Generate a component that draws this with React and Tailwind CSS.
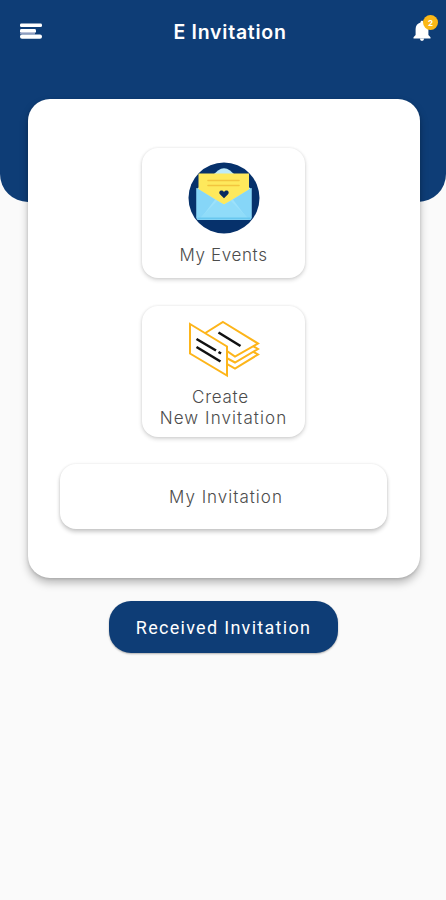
// src/App.jsx

function MenuIcon() {
  return (
    <svg width="24" height="18" viewBox="0 0 24 18" fill="#fff">
      <rect x="1" y="0.5" width="22" height="3.6" rx="1.4" />
      <rect x="1" y="6" width="16" height="4" rx="1.4" />
      <rect x="1" y="9.4" width="15" height="2" fill="#8f9dc0" />
      <rect x="1" y="11.4" width="22" height="4.4" rx="2" />
    </svg>
  )
}

function BellIcon() {
  return (
    <svg width="18" height="22" viewBox="0 0 18 22" fill="#fff">
      <path d="M9 0.8c-1 0-1.5.7-1.5 1.6C4.5 3.2 2.6 5.6 2.6 9v6L0.5 17.2V18.6H17.5V17.2L15.4 15V9c0-3.4-1.9-5.8-4.9-6.6C10.500 1.5 10 0.8 9 0.8Z" />
      <path d="M6.9 18.600h4.200a2.100 2.300 0 0 1-4.200 0Z" />
    </svg>
  )
}

function EnvelopeIcon() {
  return (
    <svg width="72" height="72" viewBox="0 0 72 72">
      <defs>
        <clipPath id="disc">
          <circle cx="36" cy="36" r="35.5" />
        </clipPath>
      </defs>
      <circle cx="36" cy="36" r="35.5" fill="#06316b" />
      <g clipPath="url(#disc)">
        <path d="M9 27L30 8.5q6-4.500 12 0L63 27Z" fill="#bdeaf9" />
        {/* letter */}
        <rect x="10.500" y="11.500" width="50.500" height="38" fill="#fee95c" />
        <path d="M20 18.500h31M20 23.500h31" stroke="#f3c53e" strokeWidth="1.600" strokeLinecap="round" />
        {/* envelope front */}
        <path d="M8.500 26L36 42.500L63.500 26V56q0 2-2 2h-51q-2 0-2-2Z" fill="#9ce1fb" />
        <path d="M8.500 26L27 37.500L12 57.500H10.500q-2 0-2-2Z" fill="#86d6f8" />
        <path d="M63.500 26L45 37.500L60 57.500h1.500q2 0 2-2Z" fill="#86d6f8" />
        <path d="M12 56L29 39L36 42.500L43 39L60 56Z" fill="#90dcf9" />
        <path d="M9.500 56.500h53" stroke="#68c7ef" strokeWidth="1.800" />
      </g>
      <path d="M36 36.300l-3.800-3.700c-2.700-2.900 1.300-6 3.800-2.700c2.500-3.300 6.500-.2 3.800 2.700Z" fill="#082b5f" />
    </svg>
  )
}

function CardsIcon() {
  return (
    <svg
      width="72"
      height="58"
      viewBox="0 0 72 58"
      fill="#fff"
      stroke="#fdb51a"
      strokeWidth="2"
      strokeLinejoin="miter"
    >
      {/* stack */}
      <path d="M34 14L70 34.500L47 48.500L20 33Z" />
      <path d="M34 8L70 29L47 42.500L18 27Z" />
      <path d="M35 2L70 23.500L47 36.500L15 14.500Z" />
      {/* front card */}
      <path d="M2 4L39 26.500V55.500L2 33.500Z" />
      <g stroke="#111" strokeWidth="2.600">
        <path d="M30.500 12.500L52.500 26" />
        <path d="M8.500 19L28 30.500" />
        <path d="M30.500 32L33 33.500" />
        <path d="M8.500 27L32.500 41.500" />
      </g>
    </svg>
  )
}

function Tile({ children, className = '' }) {
  return (
    <button
      className={`flex w-[163px] flex-col items-center rounded-[16px] bg-white shadow-[0_2px_4px_rgba(0,0,0,0.17),0_0_3px_rgba(0,0,0,0.08)] ${className}`}
    >
      {children}
    </button>
  )
}

export default function App() {
  return (
    <div className="min-h-[900px] w-full bg-[#fafafa] font-['Inter',sans-serif] text-[#4c4c4c]">
      {/* Header */}
      <header className="grid h-[202px] grid-cols-[1fr_auto_1fr] items-start rounded-b-[28px] bg-[#0e3d76] text-white">
        <div className="pt-[23px] pl-[19px]">
          <MenuIcon />
        </div>
        <h1 className="ml-[14px] pt-[18px] text-[19.5px] leading-[28px] font-semibold tracking-[0.75px]">
          E Invitation
        </h1>
        <div className="flex justify-end pt-[20px] pr-[15px]">
          <div className="relative">
            <BellIcon />
            <span className="absolute -top-[5px] left-[10px] flex size-[15px] items-center justify-center rounded-full bg-[#fbb817] text-[8px] font-bold">
              2
            </span>
          </div>
        </div>
      </header>

      {/* Main card */}
      <main className="-mt-[103px] flex flex-col items-center pr-[26px] pl-[28px]">
        <section className="flex h-[479px] w-full flex-col items-center rounded-[22px] bg-white pt-[49px] pr-px shadow-[0_5px_9px_rgba(0,0,0,0.26),0_1px_3px_rgba(0,0,0,0.14)]">
          <Tile className="h-[130px] pt-[14px]">
            <EnvelopeIcon />
            <span className="mt-[9px] text-[17px] leading-[24px] font-light tracking-[0.65px]">
              My Events
            </span>
          </Tile>

          <Tile className="mt-[28px] h-[131px] pt-[14px]">
            <CardsIcon />
            <span className="mt-[9px] pr-[6px] text-[17px] leading-[21px] font-light tracking-[0.75px]">
              Create
            </span>
            <span className="text-[17px] leading-[21px] font-light tracking-[1.1px] whitespace-nowrap">
              New Invitation
            </span>
          </Tile>

          <button className="mt-[27px] h-[65px] w-[327px] rounded-[16px] bg-white pt-[2px] pl-[5px] text-[17px] font-light tracking-[1px] shadow-[0_3px_4px_rgba(0,0,0,0.2),0_0_3px_rgba(0,0,0,0.1)]">
            My Invitation
          </button>
        </section>

        <button className="mt-[23px] mr-px h-[52px] w-[229px] rounded-[22px] bg-[#0e3d76] font-['Roboto',sans-serif] text-[18px] tracking-[1.3px] text-white shadow-[0_1px_2px_rgba(0,0,0,0.3)]">
          Received Invitation
        </button>
      </main>
    </div>
  )
}
